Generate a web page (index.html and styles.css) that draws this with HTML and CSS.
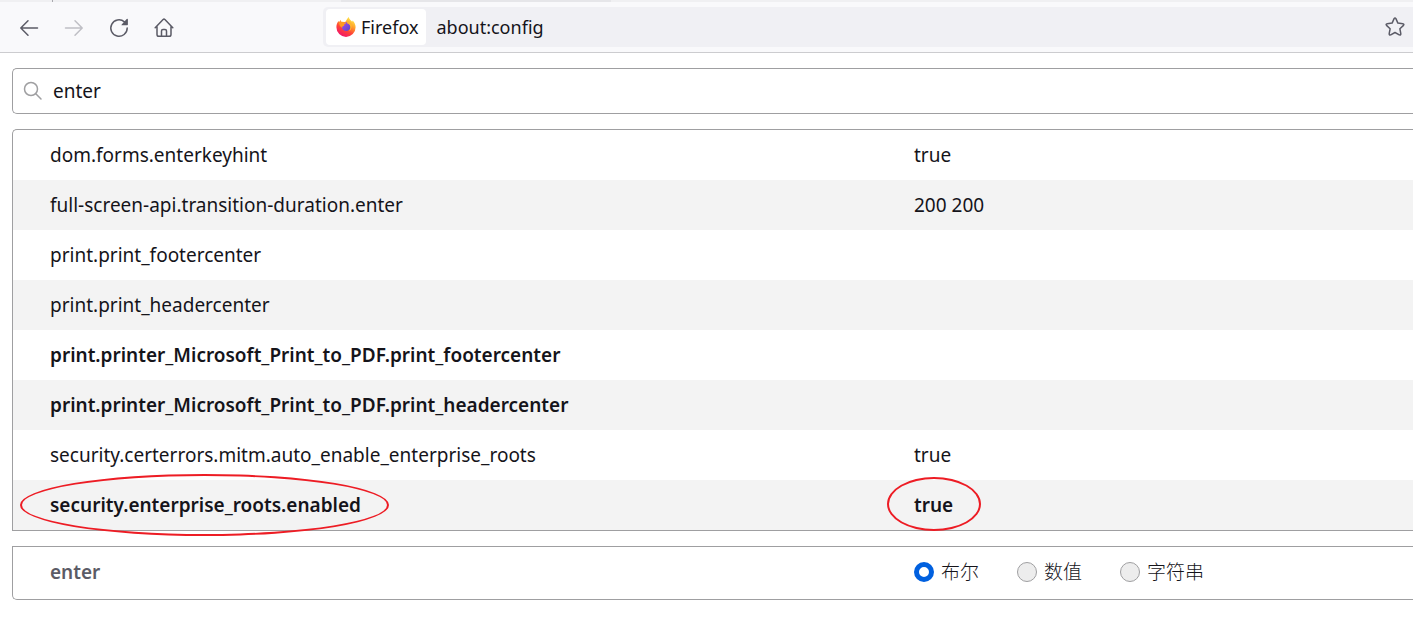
FILE: index.html
```html
<!DOCTYPE html>
<html lang="zh-CN">
<head>
<meta charset="utf-8">
<title>about:config</title>
<link rel="stylesheet" href="styles.css">
</head>
<body>
<header class="chrome">
  <div class="tabstrip"><span class="tab-divider"></span><span class="tab-edge"></span></div>
  <div class="toolbar">
    <nav class="nav-buttons">
      <button class="nav-button" type="button" aria-label="Back">
        <svg viewBox="0 0 20 20"><path d="M18.5 10H2M9 2.8 1.8 10 9 17.2"/></svg>
      </button>
      <button class="nav-button" type="button" aria-label="Forward" disabled>
        <svg viewBox="0 0 20 20"><path d="M1.5 10H18M11 2.8 18.2 10 11 17.2"/></svg>
      </button>
      <button class="nav-button" type="button" aria-label="Reload">
        <svg viewBox="0 0 20 20"><path d="M18.2 10A8.2 8.2 0 1 1 15.4 3.9"/><path class="solid" d="M18.9 1.4v5.2q0 .7-.7.7H13q-1-.1-.3-.9l5-5.4q1-.7 1.2.4z"/></svg>
      </button>
      <button class="nav-button" type="button" aria-label="Home">
        <svg viewBox="0 0 20 20"><path d="M1.2 9.8 9.1 1.5q.9-.8 1.8 0l7.9 8.3M3 8.500V16.500q0 1.800 1.800 1.800h10.400q1.800 0 1.800-1.800V8.500M7.500 18v-5q0-1.500 1.500-1.500h2q1.500 0 1.500 1.500v5"/></svg>
      </button>
    </nav>
    <div class="urlbar">
      <span class="identity">
        <svg class="firefox-logo" viewBox="0 0 20 20" aria-hidden="true">
          <defs>
            <linearGradient id="flame" x1="0.85" y1="0.05" x2="0.3" y2="1">
              <stop offset="0" stop-color="#fff44f"/><stop offset=".35" stop-color="#ffa02b"/><stop offset=".65" stop-color="#ff4438"/><stop offset="1" stop-color="#f0126f"/>
            </linearGradient>
            <linearGradient id="globe" x1="0" y1="0" x2="1" y2="1">
              <stop offset="0" stop-color="#a84be8"/><stop offset="1" stop-color="#5547c9"/>
            </linearGradient>
          </defs>
          <path fill="url(#flame)" d="M12.700 0c.4 2.400 2.400 3.200 3.500 4.700l.4-1.100c2 1.900 3 4.300 3 6.700a9.600 9.600 0 1 1-19.200 0c0-3 1-5 2.300-6.300l.3 1.300L4.700 2.700l.3 2.100 4.200.2C10.500 3.600 11.100 1.600 12.700 0z"/>
          <circle fill="url(#globe)" cx="10.200" cy="9.700" r="4.400"/>
          <path fill="#ff9a22" d="M2.900 5.600q2.600-1.400 4.700-.3l2.600.2q-.3 1.300-2.100 2l.1 1.300Q6.200 9 6.100 10.700 3.500 10 2.900 5.600z"/>
          <path fill="#ffb52e" d="M11.500 3.500q5 2 4.300 6.500-.6 3-2.900 4 2.400-3 1-5.800-1-1.700-3-2z"/>
        </svg>
        <span>Firefox</span>
      </span>
      <input class="address" type="text" value="about:config" aria-label="Address">
      <button class="bookmark" type="button" aria-label="Bookmark">
        <svg viewBox="0 0 20 20"><path d="M9.100 1.600q.9-1.400 1.800 0l2 4.500 4.900.6q1.700.4.700 1.700l-3.600 3.400.9 4.900q.1 1.700-1.500 1.200L10 15.500l-4.300 2.400q-1.600.5-1.500-1.200l.9-4.900L1.500 8.400q-1-1.300.7-1.700l4.900-.6z"/></svg>
      </button>
    </div>
  </div>
</header>
<main class="config">
  <div class="search">
    <svg class="search-icon" viewBox="0 0 20 20" aria-hidden="true"><circle cx="8" cy="8" r="6.500"/><path d="m12.800 12.800 5.200 5.200"/></svg>
    <input class="search-input" type="text" value="enter" aria-label="Search preference name">
  </div>
  <table class="prefs">
    <tbody>
      <tr><th scope="row">dom.forms.enterkeyhint</th><td>true</td></tr>
      <tr><th scope="row">full-screen-api.transition-duration.enter</th><td>200 200</td></tr>
      <tr><th scope="row">print.print_footercenter</th><td></td></tr>
      <tr><th scope="row">print.print_headercenter</th><td></td></tr>
      <tr class="modified"><th scope="row">print.printer_Microsoft_Print_to_PDF.print_footercenter</th><td></td></tr>
      <tr class="modified"><th scope="row">print.printer_Microsoft_Print_to_PDF.print_headercenter</th><td></td></tr>
      <tr><th scope="row">security.certerrors.mitm.auto_enable_enterprise_roots</th><td>true</td></tr>
      <tr class="modified"><th scope="row"><span class="marked">security.enterprise_roots.enabled<span class="ring ring-name"></span></span></th><td><span class="marked">true<span class="ring ring-value"></span></span></td></tr>
    </tbody>
  </table>
  <form class="add-pref">
    <span class="add-name">enter</span>
    <div class="types">
      <label class="type"><input type="radio" name="type" checked><span>布尔</span></label>
      <label class="type"><input type="radio" name="type"><span>数值</span></label>
      <label class="type"><input type="radio" name="type"><span>字符串</span></label>
    </div>
  </form>
</main>
</body>
</html>
```
FILE: styles.css
```css
* { box-sizing: border-box; }
body {
  margin: 0;
  background: #fff;
  color: #15141a;
  font: 19px/26px "Noto Sans", "Noto Sans CJK SC", sans-serif;
  overflow-x: hidden;
}
button { border: 0; padding: 0; background: none; display: flex; }
input { font: inherit; color: inherit; }
svg { display: block; width: 20px; height: 20px; fill: none; stroke: currentColor; stroke-width: 1.5; stroke-linecap: round; stroke-linejoin: round; }

.chrome { background: #f9f9fb; border-bottom: 1px solid #cccccf; }
.tabstrip { display: flex; height: 2px; background: #f0f0f2; }
.tab-divider { width: 1px; margin-left: 52px; background: #a9a9ae; }
.tab-edge { width: 270px; margin-left: 288px; background: #e6e6e9; }
.toolbar { display: flex; align-items: center; padding: 5px 0; }
.nav-buttons { display: flex; gap: 25px; padding: 1px 0 0 19px; width: 323px; flex: none; }
.nav-button { color: #5b5b66; }
.nav-button:disabled { color: #bfbfc5; }
.solid { fill: currentColor; stroke: none; }
.urlbar { display: flex; align-items: center; flex: 1; height: 40px; padding: 0 8px 0 3px; background: #f0f0f4; border-radius: 5px 0 0 5px; }
.identity { display: flex; align-items: center; gap: 5px; height: 36px; padding: 0 8px 0 10px; background: #fff; border-radius: 4px; font: 18px/24px "Noto Sans", sans-serif; }
.firefox-logo { stroke: none; }
.address { flex: 1; min-width: 0; padding: 0 10px; border: 0; background: none; font: 18px/24px "Noto Sans", sans-serif; }
.bookmark { color: #5b5b66; }

.config { display: flex; flex-direction: column; gap: 15px; padding: 15px 0 30px 12px; }
.search { display: flex; align-items: center; gap: 10px; height: 46px; padding-left: 10px; border: 1px solid #9f9fa1; border-right: 0; border-radius: 5px 0 0 5px; }
.search-icon { color: #9f9fa1; }
.search-input { flex: 1; padding: 0; border: 0; background: none; }

.prefs { width: 100%; table-layout: fixed; border: 1px solid #9f9fa1; border-right: 0; border-radius: 5px 0 0 0; border-spacing: 0; }
.prefs th, .prefs td { height: 50px; padding: 0; font-weight: 400; text-align: left; }
.prefs th { width: 63%; padding-left: 37px; }
.prefs td { padding-left: 19px; }
.prefs tr:nth-child(even) { background: #f3f3f3; }
.prefs .modified th, .prefs .modified td { font-weight: 600; }
.marked { position: relative; }
.ring { position: absolute; border: 2px solid #ed1c24; border-radius: 50%; }
.ring-name { inset: -18px -28px -18px -30px; }
.ring-value { inset: -15px -28px -13px -27px; }

.add-pref { display: grid; grid-template-columns: 63% 1fr; align-items: center; height: 54px; padding-bottom: 2px; border: 1px solid #9f9fa1; border-right: 0; border-radius: 0 0 0 5px; }
.add-name { padding-left: 37px; color: #5b5b66; font-weight: 600; }
.types { display: flex; gap: 38px; padding-left: 19px; font-weight: 300; }
.type { display: flex; align-items: center; gap: 7px; }
.type input { appearance: none; width: 20px; height: 20px; margin: 0; border: 1px solid #9f9fa1; border-radius: 50%; background: #ededed; }
.type input:checked { border: 5px solid #0060df; background: #fff; }
```
